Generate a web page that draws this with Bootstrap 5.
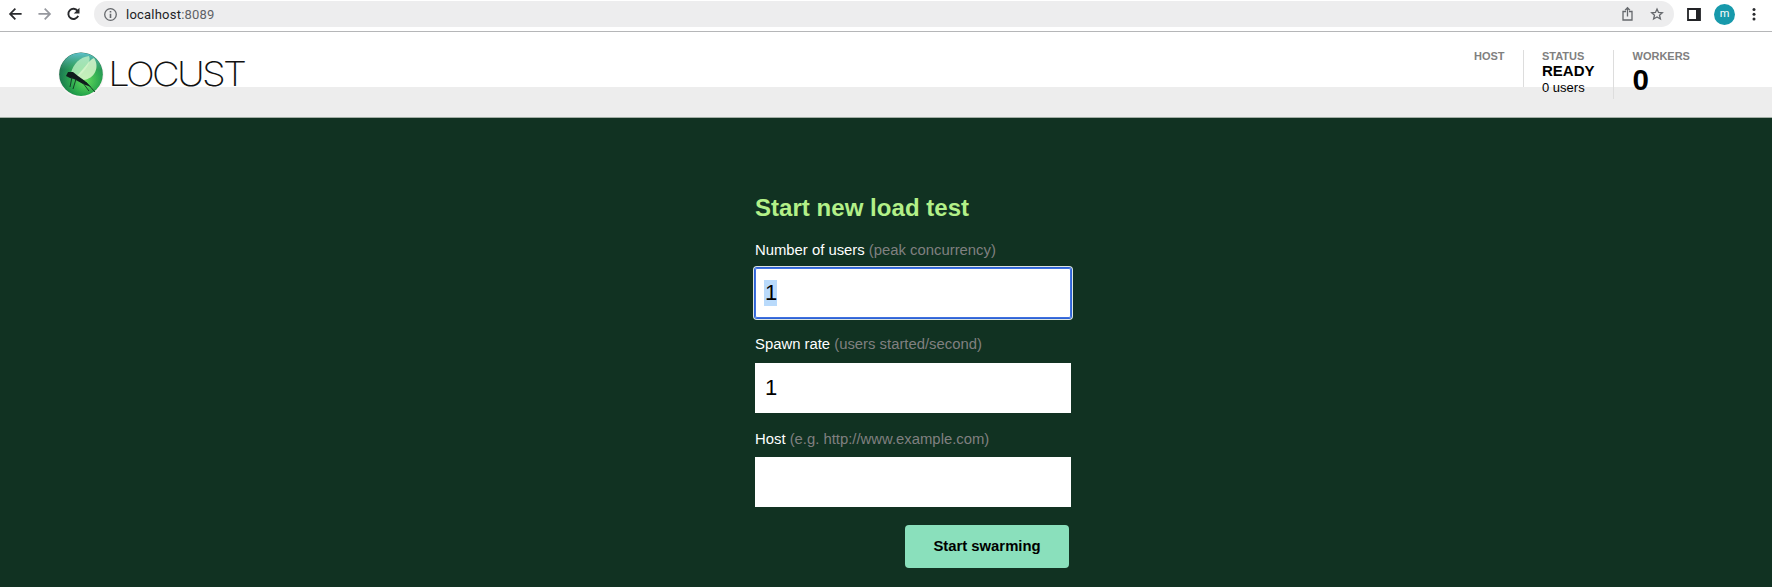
<!DOCTYPE html>
<html lang="en">
<head>
<meta charset="utf-8">
<title>Locust</title>
<link rel="stylesheet" href="https://cdn.jsdelivr.net/npm/bootstrap@5.3.0/dist/css/bootstrap.min.css">
<style>
body{font-family:"Liberation Sans",Arial,sans-serif;background:#113222;height:587px;overflow:hidden;color:#000}
.toolbar{height:32px;background:#fff;border-bottom:1px solid #b5b6b8;padding:1px 12px 4px 5px}
.nav-icons{width:89px;padding-bottom:1px}
.address{height:26px;background:#ededee;width:1580px;padding:0 10px 0 9px;font:13px/26px Roboto,sans-serif;letter-spacing:.22px;color:#606266}
.address b{font-weight:400;color:#222326}
.address div{padding-top:1px}
.side-panel{margin-left:13px}
.avatar{width:21px;height:21px;margin-left:13px;background:#1799ab;color:#fff;font:11px/19px Roboto,sans-serif;text-align:center}
.masthead{height:86px;background:linear-gradient(#fff 55px,#ededed 55px);padding-left:58px;padding-right:80px;border-bottom:1px solid #a3afa6}
.logo-mark{margin-top:19px}
.logo-name{font-family:Inter,sans-serif;font-weight:200}
.stat{font-size:11px;height:49px;margin-top:18px}
.stat-label{font-weight:700;color:#808080;line-height:13px}
.stat-line{border-left:1px solid #ddd;padding-left:18px}
.stat-host{width:49px}
.stat-status{width:90px;height:37px}
.stat-workers{width:79px;padding-left:18.500px}
.state{font-size:15px;line-height:16px;font-weight:700}
.users{font-size:13px;line-height:17px}
.count{font-size:29.500px;line-height:34px;font-weight:700}
.start-form{width:316px;margin-left:755px;padding-top:75px}
.start-form h2{font-size:24px;letter-spacing:.04px;line-height:30px;font-weight:700;color:#b3f088;margin:0 0 17px}
.start-form label{font-size:14.850px;line-height:20px;height:20px;color:#fff;margin-bottom:8.400px;display:block;white-space:nowrap}
.start-form label span{color:#808080}
.field{height:50px;background:#fff;margin-bottom:16px;padding:0 10px;font-size:22px;line-height:50px}
.field.active{box-shadow:inset 0 0 0 1px #3f70dd,0 0 0 1px #2e62d6,0 0 0 2px #dde6e2;border-radius:2px}
.field.active span{background:#b9dafb;line-height:26px;display:inline-block;margin-left:-1px;padding:0 0 0 1px}
.swarm{width:164px;height:43px;background:#8ae0bc;border:0;border-radius:4px;font-size:14.850px;font-weight:700;padding:0 0 1px;margin:2px 2px 0 0}
</style>
</head>
<body>
<div class="toolbar d-flex align-items-center">
  <svg class="nav-icons flex-shrink-0" width="89" height="26" viewBox="0 0 89 26" fill="none" stroke-width="1.8">
    <path d="M15.500 13.500H4M9 8 3.500 13.500 9 19" stroke="#292a2d"/>
    <path d="M33 13.500H44.500M39.500 8 45 13.500 39.500 19" stroke="#96989e"/>
    <path d="M73.700 10.300A5.300 5.300 0 1 0 74.300 15.500" stroke="#292a2d" stroke-width="2"/>
    <path d="M75.700 7V13H69.700Z" fill="#292a2d"/>
  </svg>
  <div class="address rounded-pill d-flex align-items-center flex-shrink-0">
    <svg width="15" height="15" viewBox="0 0 15 15" fill="none" stroke="#65686c" stroke-width="1.300"><circle cx="7.500" cy="7.500" r="5.800"/><path d="M7.500 6.700V11M7.500 4V5.500" stroke-width="1.600"/></svg>
    <div class="ms-2"><b>localhost</b>:8089</div>
    <svg class="ms-auto" width="42" height="16" viewBox="0 0 42 16" fill="none" stroke="#65686c" stroke-width="1.300"><path d="M4 5.500H1V14H10V5.500H7M5.500 10.500V1.800M3.100 4.100 5.500 1.700 7.900 4.100"/><path d="M35 3 36.500 6.400 40.300 6.800 37.500 9.200 38.400 13 35 11 31.600 13 32.500 9.200 29.700 6.800 33.500 6.400Z"/></svg>
  </div>
  <svg class="side-panel flex-shrink-0" width="14" height="13" viewBox="0 0 14 13"><path d="M1 1H13V12H1Z" fill="#fff" stroke="#222326" stroke-width="1.800"/><path d="M9 1H13V12H9Z" fill="#222326"/></svg>
  <div class="avatar rounded-circle flex-shrink-0">m</div>
  <svg class="ms-auto" width="12" height="14" viewBox="0 0 12 14" fill="#292a2d"><circle cx="6" cy="2.500" r="1.500"/><circle cx="6" cy="7.300" r="1.500"/><circle cx="6" cy="12.100" r="1.500"/></svg>
</div>

<header class="masthead d-flex align-items-start">
  <svg class="logo-mark" width="200" height="48" viewBox="0 0 200 48">
    <defs>
      <radialGradient id="orb" cx=".6" cy=".65" r=".65"><stop offset="0" stop-color="#62dc58"/><stop offset=".5" stop-color="#27a64a"/><stop offset=".85" stop-color="#137649"/><stop offset="1" stop-color="#14623f"/></radialGradient>
      <linearGradient id="shine" x1="0" y1="0" x2="0" y2="1"><stop offset="0" stop-color="#64cbdc" stop-opacity=".9"/><stop offset=".4" stop-color="#70d9a0" stop-opacity=".15"/><stop offset="1" stop-color="#80e080" stop-opacity="0"/></linearGradient>
    </defs>
    <circle cx="23.200" cy="24" r="22.800" fill="#faf3f5"/>
    <circle cx="23" cy="23.200" r="21.800" fill="url(#orb)"/>
    <circle cx="23" cy="23.200" r="21.500" fill="url(#shine)"/>
    <path d="M13 22C15 13 22 6 31 5C34 11 27 20 20 26Z" fill="#c4f4c8" opacity=".75"/>
    <path d="M18 26C25 19 31 9 36 7C42 16 37 28 25 29Z" fill="#d8f6cb" opacity=".85"/>
    <path d="M8 25 10 21 15 21 20 25 27 30 33 36 25 33 16 28 12 27Z" fill="#101c1c"/>
    <path d="M14 26 12 36M18 28 15 38M25 32 31 40M28 31 37 41" stroke="#123322" stroke-width=".9" fill="none"/>
    <text class="logo-name" transform="translate(50.300 35.200) scale(1.140 1)" font-size="33.500" textLength="121.500" lengthAdjust="spacing" fill="#111">LOCUST</text>
  </svg>
  <div class="stat stat-host ms-auto"><div class="stat-label">HOST</div></div>
  <div class="stat stat-line stat-status">
    <div class="stat-label">STATUS</div><div class="state">READY</div><div class="users text-nowrap">0 users</div>
  </div>
  <div class="stat stat-line stat-workers">
    <div class="stat-label">WORKERS</div><div class="count">0</div>
  </div>
</header>

<main>
  <form class="start-form">
    <h2>Start new load test</h2>
    <label>Number of users <span>(peak concurrency)</span></label>
    <div class="field active"><span>1</span></div>
    <label>Spawn rate <span>(users started/second)</span></label>
    <div class="field">1</div>
    <label>Host <span>(e.g. http://www.example.com)</span></label>
    <div class="field"></div>
    <div class="d-flex justify-content-end"><button class="swarm" type="button">Start swarming</button></div>
  </form>
</main>
<script src="https://cdn.jsdelivr.net/npm/bootstrap@5.3.0/dist/js/bootstrap.bundle.min.js"></script>
</body>
</html>
